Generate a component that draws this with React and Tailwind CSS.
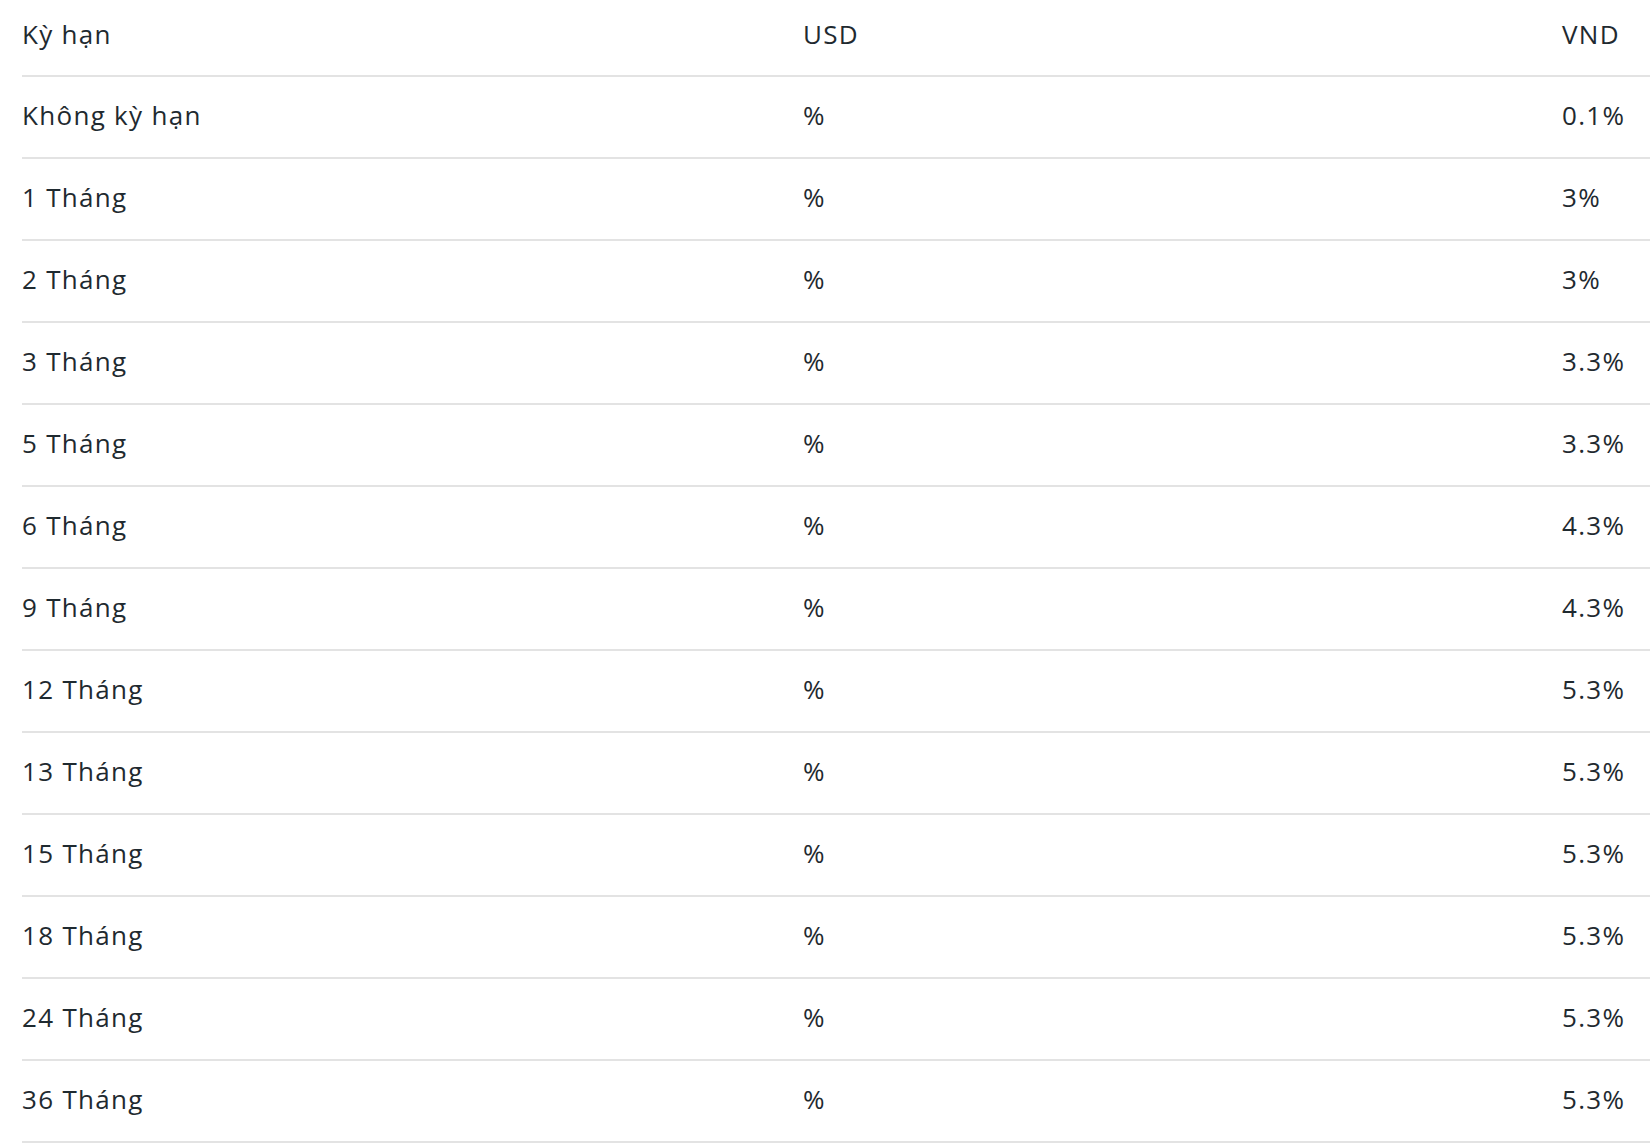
import React from "react";

const rows = [
  ["Không kỳ hạn", "%", "0.1%"],
  ["1 Tháng", "%", "3%"],
  ["2 Tháng", "%", "3%"],
  ["3 Tháng", "%", "3.3%"],
  ["5 Tháng", "%", "3.3%"],
  ["6 Tháng", "%", "4.3%"],
  ["9 Tháng", "%", "4.3%"],
  ["12 Tháng", "%", "5.3%"],
  ["13 Tháng", "%", "5.3%"],
  ["15 Tháng", "%", "5.3%"],
  ["18 Tháng", "%", "5.3%"],
  ["24 Tháng", "%", "5.3%"],
  ["36 Tháng", "%", "5.3%"],
];

export default function App() {
  return (
    <div
      className="min-h-screen bg-white pl-[22px] text-[#1f2a30]"
      style={{ fontFamily: "'Open Sans', 'Noto Sans', sans-serif" }}
    >
      <div className="grid h-[77px] grid-cols-[781px_759px_1fr] items-center border-b-2 border-[#e3e3e3] pb-[7px] text-[26px] tracking-[0.05em]">
        <div>Kỳ hạn</div>
        <div>USD</div>
        <div>VND</div>
      </div>
      {rows.map((r, i) => (
        <div
          key={i}
          className="grid h-[82px] grid-cols-[781px_759px_1fr] items-center border-b-2 border-[#e3e3e3] pb-[3px] text-[26px] tracking-[0.05em]"
        >
          <div>{r[0]}</div>
          <div>{r[1]}</div>
          <div>{r[2]}</div>
        </div>
      ))}
    </div>
  );
}
